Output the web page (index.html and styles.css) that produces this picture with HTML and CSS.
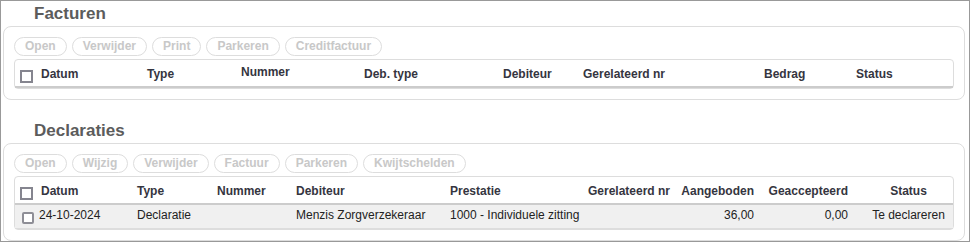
FILE: index.html
```html
<!DOCTYPE html>
<html lang="nl">
<head>
  <meta charset="UTF-8" />
  <title>Facturen en declaraties</title>
  <link rel="stylesheet" href="styles.css">
</head>
<body>
  <div class="frame">

    <h2 class="block-title">Facturen</h2>
    <div class="panel">
      <div class="toolbar">
        <button class="btn" disabled>Open</button>
        <button class="btn" disabled>Verwijder</button>
        <button class="btn" disabled>Print</button>
        <button class="btn" disabled>Parkeren</button>
        <button class="btn" disabled>Creditfactuur</button>
      </div>
      <div class="grid">
        <div class="row head cols-facturen">
          <div class="cell first"><span class="check"></span>Datum</div>
          <div class="cell">Type</div>
          <div class="cell raised">Nummer</div>
          <div class="cell">Deb. type</div>
          <div class="cell">Debiteur</div>
          <div class="cell">Gerelateerd nr</div>
          <div class="cell">Bedrag</div>
          <div class="cell">Status</div>
        </div>
      </div>
    </div>

    <h2 class="block-title">Declaraties</h2>
    <div class="panel">
      <div class="toolbar">
        <button class="btn" disabled>Open</button>
        <button class="btn" disabled>Wijzig</button>
        <button class="btn" disabled>Verwijder</button>
        <button class="btn" disabled>Factuur</button>
        <button class="btn" disabled>Parkeren</button>
        <button class="btn" disabled>Kwijtschelden</button>
      </div>
      <div class="grid">
        <div class="row head cols-declaraties">
          <div class="cell first"><span class="check"></span>Datum</div>
          <div class="cell">Type</div>
          <div class="cell">Nummer</div>
          <div class="cell">Debiteur</div>
          <div class="cell">Prestatie</div>
          <div class="cell">Gerelateerd nr</div>
          <div class="cell num">Aangeboden</div>
          <div class="cell num">Geaccepteerd</div>
          <div class="cell center">Status</div>
        </div>
        <div class="row data cols-declaraties">
          <div class="cell first"><span class="check small"></span>24-10-2024</div>
          <div class="cell">Declaratie</div>
          <div class="cell"></div>
          <div class="cell">Menzis Zorgverzekeraar</div>
          <div class="cell">1000 - Individuele zitting</div>
          <div class="cell"></div>
          <div class="cell num">36,00</div>
          <div class="cell num">0,00</div>
          <div class="cell center">Te declareren</div>
        </div>
      </div>
    </div>

  </div>
</body>
</html>
```

FILE: styles.css
```css
html, body {
  margin: 0;
  padding: 0;
  background-color: #fff;
}
body {
  font-family: "Liberation Sans", Arial, sans-serif;
  font-size: 12px;
  color: #222;
}
.frame {
  height: 100vh;
  box-sizing: border-box;
  border: 1px solid #999;
  padding: 3px 4px 0 2px;
}
.block-title {
  margin: 0 0 2px;
  padding-left: 31px;
  font-size: 17px;
  line-height: 20px;
  font-weight: bold;
  color: #5c5c5c;
}
.panel {
  border: 1px solid #ddd;
  border-radius: 8px;
  padding: 10px 10px 10px;
  margin-bottom: 21px;
}
.toolbar {
  display: flex;
  gap: 5px;
  margin-bottom: 3px;
}
.btn {
  font-family: inherit;
  font-size: 12px;
  font-weight: bold;
  line-height: 17px;
  height: 19px;
  padding: 0 10px;
  color: #c8c8c8;
  background-color: #fff;
  border: 1px solid #ddd;
  border-radius: 10px;
}
.grid {
  border: 1px solid #ddd;
  border-radius: 4px;
}
.row {
  display: grid;
  align-items: start;
}
.cols-facturen {
  grid-template-columns: 132px 94px 123px 139px 80px 181px 92px 1fr;
}
.cols-declaraties {
  grid-template-columns: 122px 80px 79px 154px 138px 84px 92px 94px 1fr;
}
.row.head {
  font-weight: bold;
  color: #353540;
  line-height: 14px;
  padding: 7px 0 3px;
  border-bottom: 2px solid #ccc;
}
.row.data {
  line-height: 14px;
  padding: 3px 0 4px;
  background-color: #f0f0f0;
  border-bottom: 1px solid #ddd;
}
.cell {
  white-space: nowrap;
}
.cell.first {
  display: flex;
  align-items: flex-start;
  padding-left: 5px;
}
.row.data .cell.first {
  padding-left: 7px;
}
.cell.raised {
  margin-top: -2px;
}
.cell.num {
  text-align: right;
  padding-right: 10px;
}
.cell.center {
  text-align: center;
  padding-left: 6px;
}
.check {
  display: inline-block;
  width: 13px;
  height: 13px;
  box-sizing: border-box;
  border: 2px solid #85858f;
  background-color: #fff;
  margin: 3px 8px 0 0;
}
.check.small {
  width: 12px;
  height: 12px;
  border-color: #8e8e96;
  border-radius: 2px;
  margin: 4px 5px 0 0;
}
```
